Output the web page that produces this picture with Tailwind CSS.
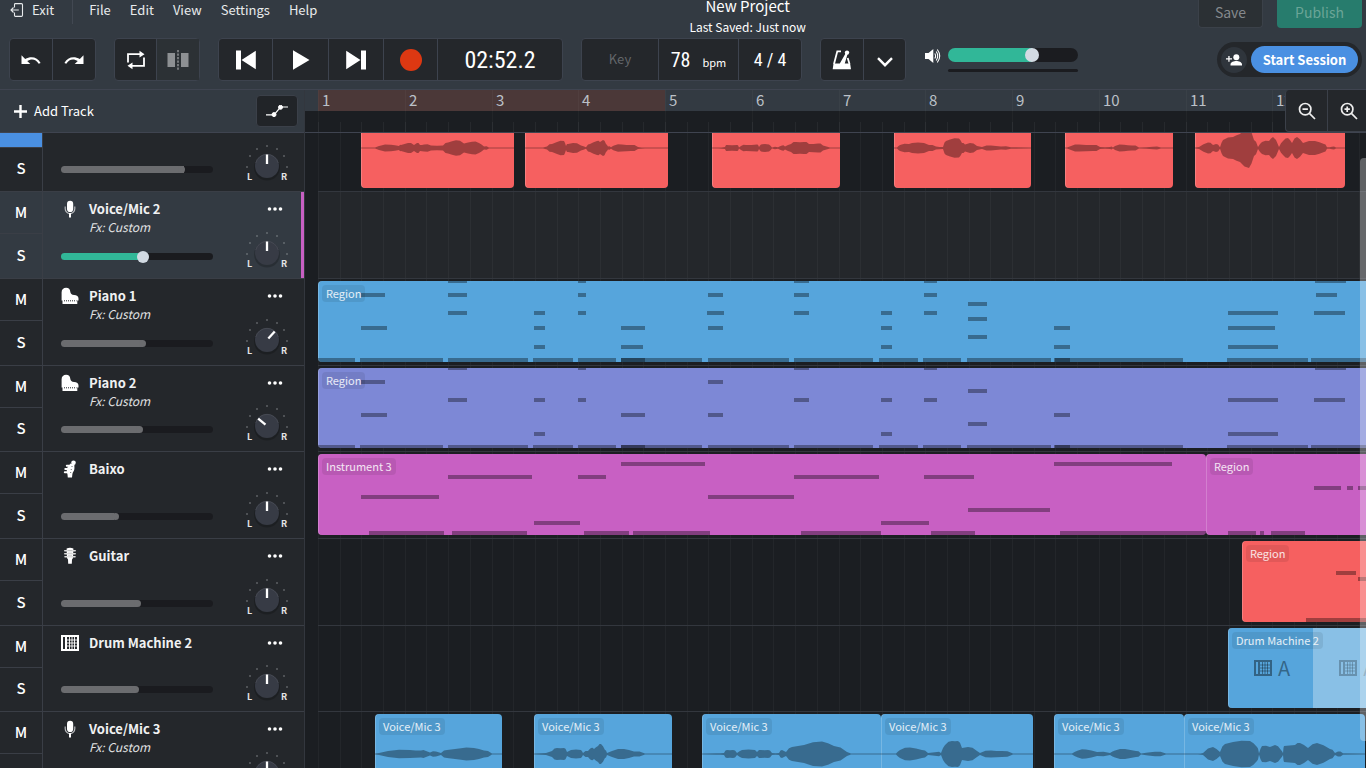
<!DOCTYPE html>
<html lang="en">
<head>
    <meta charset="UTF-8">
    <meta name="viewport" content="width=device-width, initial-scale=1.0">
    <title>New Project</title>
    <script src="https://cdn.jsdelivr.net/npm/@tailwindcss/browser@4"></script>
</head>
<body class="h-screen overflow-hidden flex flex-col bg-[#1b1e22] text-white font-['Noto_Sans_CJK_SC','Noto_Sans',sans-serif]">

    <!-- icons used more than once -->
    <svg class="hidden">
        <symbol id="icon-mic" viewBox="0 0 18 18">
            <rect x="6" y=".8" width="6.200" height="11.200" rx="3.100" fill="#fff"/>
            <path d="M4.200 6.500v2.300a4.800 4.800 0 0 0 9.600 0V6.500" fill="none" stroke="#b8babd" stroke-width="1.200"/>
            <path d="M9 13v4.500" stroke="#fff" stroke-width="2"/>
        </symbol>
        <symbol id="icon-piano" viewBox="0 0 18 18">
            <path d="M.6 13.500V5.200C.6 2.500 2.600.8 5.100.8c2.600 0 4 1.500 4.200 4 .2 2 1.400 3 3.800 3.200 2.700.2 4.400 1.300 4.400 3.400v2.100z" fill="#fff"/>
            <path d="M1.500 13h14.800v4H1.500z" fill="#fff"/>
            <path d="M3 13.800h12.500" stroke="#24272b" stroke-width="1" stroke-dasharray="1 1"/>
        </symbol>
        <symbol id="icon-bass" viewBox="0 0 18 18">
            <circle cx="12.500" cy="2.800" r="2.300" fill="#fff"/>
            <path d="M9.500 3.500 13.600 4.500C13 6 13.800 7.500 13.300 9.500c-.4 1.700-1.600 2.700-1.900 4.500l-.4 3.500H6.800l-.3-3C5.800 12 5.500 10.500 6 8.500c.4-2 2.500-3 3.500-5z" fill="#fff"/>
            <path d="M5.800 5.800h3M4.300 9h3M3.800 12.300h3" stroke="#fff" stroke-width="2" stroke-linecap="round"/>
            <path d="M11 6v1M10.300 9v1M9.600 12v1" stroke="#888" stroke-width="1.200"/>
        </symbol>
        <symbol id="icon-guitar" viewBox="0 0 18 18">
            <path d="M5.600 1.500Q9 .2 12.400 1.500L12 11l-1 1.500-.2 4.200H7.200L7 12.500 6 11z" fill="#fff"/>
            <path d="M3.800 3.800h10.400M3.800 6.800h10.400M4 9.800h10" stroke="#ddd" stroke-width="1.600" stroke-linecap="round"/>
            <path d="M8 3v7M10 3v7" stroke="#999" stroke-width=".7" stroke-dasharray="1 1.500"/>
        </symbol>
        <symbol id="icon-drum" viewBox="0 0 18 18">
            <path d="M0 1h18v16H0zM2 3v12h2V3zM6 3v12h10V3z" fill="currentColor" fill-rule="evenodd"/>
            <path d="M8.500 3v12M11 3v12M13.500 3v12M6 6h10M6 9h10M6 12h10" stroke="currentColor" stroke-width=".9"/>
        </symbol>
        <symbol id="icon-undo" viewBox="0 0 20 12">
            <path d="M.5 1.200v8.800h8.800L6.200 7C10.500 4.200 15 5 17.700 9.800l1.900-.7C16.600 3 10 1.600 4.200 5z" fill="#fff"/>
        </symbol>
    </svg>

    <header class="shrink-0 bg-[#333a42] border-b border-[#3f4450]">
        <div class="flex items-start h-[38px] pr-1">
            <nav class="flex items-start text-[13px] leading-5 text-[#e8eaec]">
                <a href="#" class="flex items-center pl-[10px]">
                    <svg class="w-3.5 h-3.5 mr-2" viewBox="0 0 14 14" fill="none" stroke="#e8eaec" stroke-width="1.1">
                        <path d="M4.500 4.500V1.500q0-.9.900-.9h6q1.100 0 1.100 1.100v10.600q0 1.100-1.100 1.100h-6q-.9 0-.9-.9V9.500M8.800 7H1M3.500 4.500 1 7l2.500 2.500"/>
                    </svg>
                    Exit
                </a>
                <span class="w-px h-6 ml-[18px] mr-4 bg-[#424852]"></span>
                <a href="#" class="mr-[19px]">File</a>
                <a href="#" class="mr-[19px]">Edit</a>
                <a href="#" class="mr-[19px]">View</a>
                <a href="#" class="mr-[19px]">Settings</a>
                <a href="#">Help</a>
            </nav>
            <div class="flex-1 pr-5 text-center">
                <h1 class="text-[15px] leading-3">New Project</h1>
                <p class="mt-1 text-[12px] leading-[21px]">Last Saved: Just now</p>
            </div>
            <button class="w-[65px] h-7 pb-1 mr-3.5 rounded-b border border-t-0 border-[#3b4149] bg-[#2b3034] text-[14px] leading-5 text-[#85898d]">Save</button>
            <button class="w-[85px] h-7 pb-1 rounded-b bg-[#277c6d] text-[14px] leading-5 text-[#6ba597]">Publish</button>
        </div>

        <div class="flex items-start gap-[18px] pl-[9px] pr-1 pb-2">
            <div class="flex h-[43px] rounded border border-[#3d434e] bg-[#24272b] divide-x divide-[#3d434e]">
                <button aria-label="Undo" class="w-[43px] flex items-center justify-center"><svg class="w-5 h-3"><use href="#icon-undo"/></svg></button>
                <button aria-label="Redo" class="w-[42px] flex items-center justify-center"><svg class="w-5 h-3 -scale-x-100"><use href="#icon-undo"/></svg></button>
            </div>

            <div class="flex h-[43px] rounded border border-[#3d434e] bg-[#24272b] divide-x divide-[#3d434e]">
                <button aria-label="Loop" class="w-[42px] flex items-center justify-center">
                    <svg class="w-5 h-5" viewBox="0 0 20 20">
                        <path d="M2 12.500V4.200h13M18 7.500v8.300H5" fill="none" stroke="#fff" stroke-width="1.800"/>
                        <path d="M13.500.8 18.500 4.200 13.500 7.600zM6.500 12.400 1.500 15.800 6.500 19.200z" fill="#fff"/>
                    </svg>
                </button>
                <button aria-label="Split" class="w-[42px] flex items-center justify-center bg-[#2c3135]">
                    <svg class="w-[22px] h-5" viewBox="0 0 22 20">
                        <path d="M.5 3H8v14H.5zM14 3h7.500v14H14z" fill="#8d9093"/>
                        <path d="M11 0v20" stroke="#8d9093" stroke-width="1.500" stroke-dasharray="2.200 1.300"/>
                    </svg>
                </button>
            </div>

            <div class="flex h-[43px] rounded border border-[#3d434e] bg-[#24272b] divide-x divide-[#3d434e]">
                <button aria-label="Go to start" class="w-[54px] flex items-center justify-center">
                    <svg class="w-5 h-5" viewBox="0 0 20 20" fill="#fff"><path d="M0 .5h5v19H0zM19.800.8v18.400L5.500 10z"/></svg>
                </button>
                <button aria-label="Play" class="w-[56px] flex items-center justify-center">
                    <svg class="w-5 h-5" viewBox="0 0 20 20" fill="#fff"><path d="M2 .3 18.500 10 2 19.700z"/></svg>
                </button>
                <button aria-label="Go to end" class="w-[55px] flex items-center justify-center">
                    <svg class="w-5 h-5" viewBox="0 0 20 20" fill="#fff"><path d="M15 .5h5v19h-5zM.2.8v18.400L14.500 10z"/></svg>
                </button>
                <button aria-label="Record" class="w-[54px] flex items-center justify-center">
                    <span class="size-[22px] rounded-full bg-[#dd3812]"></span>
                </button>
                <div class="w-[124px] flex items-center justify-center text-[24px] font-['Liberation_Sans_Narrow','Roboto_Condensed',sans-serif]">02:52.2</div>
            </div>

            <div class="flex h-[43px] rounded border border-[#3d434e] bg-[#24272b] divide-x divide-[#3d434e]">
                <button class="w-[77px] pb-0.5 text-[13px] text-[#63666a]">Key</button>
                <button class="w-[80px] flex items-baseline justify-center gap-3 pt-1.5 text-[20px] font-['Liberation_Sans_Narrow','Roboto_Condensed',sans-serif]">78 <span class="text-[11px] font-['Noto_Sans_CJK_SC',sans-serif]">bpm</span></button>
                <button class="w-[62px] text-[18px] font-['Liberation_Sans_Narrow','Roboto_Condensed',sans-serif]">4 / 4</button>
            </div>

            <div class="flex h-[43px] rounded border border-[#3d434e] bg-[#24272b] divide-x divide-[#3d434e]">
                <button aria-label="Metronome" class="w-[43px] flex items-center justify-center">
                    <svg class="w-5 h-5" viewBox="0 0 20 20">
                        <path d="M9 1.300H5.300L2 14M15.700 8 17.500 14" fill="none" stroke="#fff" stroke-width="1.800"/>
                        <path d="M1.500 13.500h16.600l.9 5.700H.7zM7.500 14l6.300-11 1.800 1-3 10z" fill="#fff"/>
                        <circle cx="15" cy="2.600" r="2.200" fill="#fff"/>
                    </svg>
                </button>
                <button aria-label="Metronome options" class="w-[41px] flex items-center justify-center">
                    <svg class="w-4 h-2.5 mt-1" viewBox="0 0 16 10" fill="none" stroke="#fff" stroke-width="2.400"><path d="M1 1.200 8 8.200 15 1.200"/></svg>
                </button>
            </div>

            <div class="flex items-start gap-1.5 mt-2.5">
                <svg class="w-[18px] h-4" viewBox="0 0 18 16">
                    <path d="M1 5h3.500l4.800-4v14l-4.800-4H1z" fill="#fff"/>
                    <path d="M10.800 5.500q1.600 2.500 0 5M12.200 3.500q3 4.500 0 9M13.300 1.500q4.800 6.500 0 13" fill="none" stroke="#fff" stroke-width="1.100"/>
                </svg>
                <div class="w-[130px]">
                    <input type="range" aria-label="Master volume" min="0" max="100" value="66" style="background:linear-gradient(to right,#31b798 65%,#1b1c20 65%)"
                        class="block w-full h-[14px] appearance-none rounded-full [&::-webkit-slider-thumb]:appearance-none [&::-webkit-slider-thumb]:size-[14px] [&::-webkit-slider-thumb]:rounded-full [&::-webkit-slider-thumb]:bg-[#d2dae3]">
                    <div class="h-[3px] mt-[7px] rounded-full bg-[#1b1c20]"></div>
                </div>
            </div>

            <div class="ml-auto mt-1 flex items-center gap-1 h-[35px] px-1 rounded-full bg-[#24272b]">
                <button aria-label="Invite" class="size-[26px] rounded-full bg-[#2f353c] flex items-center justify-center">
                    <svg class="w-4 h-4" viewBox="0 0 16 16" fill="#fff">
                        <circle cx="10.300" cy="5.300" r="3"/>
                        <path d="M4.500 13.500v-1.200C4.500 10.200 8 9 10.300 9S16 10.200 16 12.300v1.200zM2.300 4h1.300v2.200H6v1.300H3.600v2.200H2.300V7.500H0V6.200h2.300z"/>
                    </svg>
                </button>
                <button class="w-[107px] h-[27px] rounded-full bg-[#4a90e2] text-[13px] leading-5 font-bold">Start Session</button>
            </div>
        </div>
    </header>

    <main class="flex flex-1 min-h-0">
        <aside class="w-[305px] shrink-0 flex flex-col border-r border-[#33373e] bg-[#24272b]">
            <div class="shrink-0 h-[43px] flex items-center justify-between pl-3.5 pr-1.5 bg-[#333a42] border-b border-[#3f4450]">
                <button class="flex items-center gap-[7px] text-[13px]">
                    <svg class="w-[13px] h-[13px]" viewBox="0 0 13 13" stroke="#fff" stroke-width="2.400"><path d="M6.500 0v13M0 6.500h13"/></svg>
                    Add Track
                </button>
                <button aria-label="Automation" class="w-[42px] h-8 rounded border border-[#3b4049] bg-[#212428] flex items-center justify-center">
                    <svg class="w-[22px] h-3" viewBox="0 0 22 12" stroke="#fff" fill="#fff">
                        <path d="M0 9.800h8L14.500 2H22" fill="none" stroke-width="1.200"/>
                        <circle cx="8" cy="9.600" r="2"/><circle cx="14.500" cy="2.300" r="2"/>
                    </svg>
                </button>
            </div>
            <div class="flex-1 min-h-0 overflow-hidden">
                <div id="tracks" class="-mt-7"></div>
            </div>
        </aside>

        <section class="relative flex-1 min-w-0 flex flex-col overflow-hidden">
            <svg id="ruler" class="shrink-0 w-full h-[43px]"></svg>
            <div class="relative flex-1 min-h-0 overflow-hidden pl-[13px]">
                <div id="lanes" class="-mt-7"></div>
            </div>
            <div class="absolute top-0 -right-1 flex h-[42px] rounded-l border border-t-0 border-[#3b4049] bg-[#24272b] divide-x divide-[#3b4049]">
                <button aria-label="Zoom out" class="w-[42px] flex items-center justify-center">
                    <svg class="w-[18px] h-[18px]" viewBox="0 0 18 18" fill="none" stroke="#eee" stroke-width="1.700"><circle cx="7.200" cy="7.200" r="5.700"/><path d="M11.400 11.400 17 17M4.500 7.200h5.400"/></svg>
                </button>
                <button aria-label="Zoom in" class="w-[41px] flex items-center justify-center">
                    <svg class="w-[18px] h-[18px]" viewBox="0 0 18 18" fill="none" stroke="#eee" stroke-width="1.700"><circle cx="7.200" cy="7.200" r="5.700"/><path d="M11.400 11.400 17 17M4.500 7.200h5.400M7.200 4.500v5.400"/></svg>
                </button>
            </div>
            <div class="absolute right-0 top-[68px] bottom-[27px] w-1.5 rounded-l bg-white/30"></div>
        </section>
    </main>

    <script>
        const BAR = 86.75;
        const BARS = 24;

        // Note rows are [y, start, end, start, end, ...], x counted from the start of the song
        const pianoBottom = [79, 0, 37, 42, 125, 130, 210, 215, 255, 260, 298, 303, 384, 303, 327, 390, 471, 476, 555, 561, 600, 605, 643, 649, 733, 736, 865, 737, 752, 909, 990, 993, 1080];
        const piano1 = [
            [0, 130, 149, 260, 268, 476, 491, 606, 619, 997, 1028],
            [14, 43, 67, 130, 149, 260, 268, 390, 405, 476, 491, 606, 619, 998, 1019],
            [23, 650, 669],
            [32, 130, 149, 216, 227, 260, 268, 389, 406, 476, 491, 563, 574, 606, 619, 910, 960, 996, 1027],
            [38, 650, 669],
            [47, 43, 69, 216, 227, 303, 327, 390, 405, 563, 574, 736, 752, 910, 957],
            [56, 650, 669],
            [66, 216, 227, 303, 325, 563, 574, 736, 752, 910, 960],
            pianoBottom
        ];
        const piano2 = [
            [0, 130, 149, 260, 268, 476, 491, 606, 619, 997, 1028],
            [14, 43, 67, 390, 405],
            [23, 650, 669],
            [32, 130, 149, 216, 227, 260, 268, 476, 491, 563, 574, 606, 619, 910, 960, 996, 1027],
            [47, 43, 69, 303, 327, 390, 405, 736, 752],
            [56, 650, 669],
            [66, 216, 227, 563, 574, 910, 960],
            pianoBottom
        ];
        const bass1 = [
            [10, 303, 387, 736, 854],
            [23, 130, 214, 260, 288, 476, 561, 606, 656],
            [43, 43, 121, 390, 476],
            [56, 650, 732],
            [69, 216, 262, 563, 611],
            [79, 51, 126, 134, 209, 266, 311, 315, 392, 483, 563, 613, 657, 742, 888]
        ];

        // Waveforms are [x, amplitude, x, amplitude, ...]
        const tracks = [
            { name: 'Voice/Mic 1', icon: 'mic', volume: 81, pan: 0, muted: true, color: '#f66060', regions: [
                { x: 43, w: 153, wave: [14, .5, 18, 2, 30, 3.3, 38, 2, 40, 3, 47, 5, 53, 3, 56, 5, 59, 3, 63, 3.5, 70, 2.5, 82, 2.5, 87, 5.5, 95, 7.7, 103, 4.5, 111, 6.3, 118, 5, 123, 1.5, 128, .5] },
                { x: 207, w: 143, wave: [18, .5, 22, 1.5, 27, 4, 32, 6, 39, 7, 41, 2, 43, 4, 48, 5, 56, 2.5, 61, .7, 65, 4, 72, 7, 75, 6, 78, 8, 81, 4, 83, 1.5, 86, .7, 89, 2.5, 97, 3.5, 106, 3, 113, 1, 120, .5] },
                { x: 394, w: 128, wave: [6, .5, 13, 1, 15, 3, 25, 3, 27, .5, 29, 2, 34, 3, 45, 3.5, 47, 1, 49, 3.5, 57, 3.5, 60, .5, 66, .7, 70, 2.5, 73, 1.5, 79, 4, 84, 6, 92, 6, 97, 4, 106, 4.5, 111, 2.5, 118, .5] },
                { x: 576, w: 137, wave: [3, .5, 6, 3, 15, 4, 18, 5, 30, 5, 35, 3, 42, 1.5, 49, 1, 52, 7, 56, 8.5, 65, 9.5, 68, 5, 71, 3.5, 76, 5, 83, 2, 88, 1, 97, 2.5, 107, 1.5, 117, .7] },
                { x: 747, w: 108, wave: [2, .5, 6, 2, 14, 3.5, 28, 3, 35, 1, 45, 1, 48, .5, 50, 2, 59, 3.3, 67, 2.5, 74, .5, 88, 1.3, 96, .5] },
                { x: 877, w: 150, wave: [4, 1, 13, 5.5, 18, 3, 21, 4, 25, .7, 28, 8, 38, 11, 45, 14, 54, 20, 59, 8, 63, 1, 67, 6, 74, 7, 78, 11, 84, 1, 88, 7, 93, 10, 97, 5, 102, 11, 108, 5, 120, 7, 129, 4, 132, .7, 137, 1.2, 141, .5] }
            ] },
            { name: 'Voice/Mic 2', fx: true, icon: 'mic', volume: 54, pan: 0, selected: true, color: '#c860c3', regions: [] },
            { name: 'Piano 1', fx: true, icon: 'piano', volume: 54, pan: 42, color: '#56a5dc', regions: [{ name: 'Region', x: 0, w: 1400, notes: piano1 }] },
            { name: 'Piano 2', fx: true, icon: 'piano', volume: 52, pan: -50, color: '#7d88d6', regions: [{ name: 'Region', x: 0, w: 1400, notes: piano2 }] },
            { name: 'Baixo', icon: 'bass', volume: 35, pan: 0, color: '#c860c3', regions: [
                { name: 'Instrument 3', x: 0, w: 888, notes: bass1 },
                { name: 'Region', x: 888, w: 500, notes: [[34, 108, 135, 141, 147, 152, 175], [79, 22, 50, 54, 58, 65, 99]] }
            ] },
            { name: 'Guitar', icon: 'guitar', volume: 50, pan: 0, color: '#f66060', regions: [
                { name: 'Region', x: 924, w: 500, notes: [[32, 94, 114], [38, 116, 136], [79, 64, 300]] }
            ] },
            { name: 'Drum Machine 2', icon: 'drum', volume: 49, pan: 0, color: '#56a5dc', regions: [
                { name: 'Drum Machine 2', x: 910, w: 500, pattern: 'A' }
            ] },
            { name: 'Voice/Mic 3', fx: true, icon: 'mic', volume: 50, pan: 0, color: '#56a5dc', regions: [
                { x: 57, w: 127, wave: [4, 1, 13, 3, 35, 4, 46, 3.5, 51, 3, 55, 1.5, 61, 2.5, 66, 1, 72, 4, 84, 5.5, 99, 6, 109, 3.5, 117, .5] },
                { x: 216, w: 138, wave: [12, 1, 18, 3, 23, 6, 30, 6, 33, 2, 37, 4, 47, 4, 49, 1, 54, 3, 57, 6, 60, 5, 64, 8, 67, 10, 71, 4, 73, 1, 78, 3, 90, 5, 100, 2.5, 111, .5] },
                { x: 384, w: 179, wave: [14, .7, 22, 1, 25, 4, 31, 4, 35, 1, 40, 4, 53, 4, 55, 2, 59, 4, 66, 4, 70, 1, 77, 1, 80, 4, 84, 2, 90, 7, 102, 9, 120, 12.5, 132, 8, 145, 2, 149, .5] },
                { x: 563, w: 152, wave: [15, .5, 19, 4, 29, 6.5, 41, 4, 47, 1, 56, 2, 60, 1, 64, 9, 71, 13, 77, 13, 81, 6, 87, 7, 96, 3, 99, 1, 110, 3.5, 121, 3, 132, .5] },
                { x: 736, w: 130, wave: [18, .5, 24, 3.5, 32, 4.5, 43, 2, 56, 1, 61, 3.5, 71, 5, 82, 3, 87, .5, 101, 2.3, 112, .5] },
                { x: 866, w: 181, wave: [14, .5, 19, 1, 29, 7, 36, 2, 41, 10, 49, 12, 66, 13, 73, 7, 75, .7, 78, 8, 86, 7, 91, 9, 97, 4, 99, 1, 100, 8, 111, 9, 116, 11, 124, 6, 133, 11, 146, 5, 151, 1, 154, 2.5, 159, .7] }
            ] }
        ];

        function knob(track) {
            const dots = [[-20, 1], [-17, -10], [-10, -17], [0, -20], [10, -17], [17, -10], [20, 1]];
            return `
                <label class="block">
                    <input type="range" class="sr-only" aria-label="${track.name} pan" min="-90" max="90" value="${track.pan}">
                    <svg class="w-11 h-11" viewBox="-22 -22 44 44">
                        ${dots.map(([x, y]) => `<circle cx="${x}" cy="${y}" r=".7" fill="#9a9da1"/>`).join('')}
                        <circle cy="1.5" r="13" fill="#000" fill-opacity=".2"/>
                        <circle r="12" fill="#373b45"/>
                        <path d="M-11.300 -3A11.700 11.700 0 0 1 11.300 -3" fill="none" stroke="#4a4e57" stroke-width=".8"/>
                        <path d="M0 -11.500V-2" stroke="#fff" stroke-width="2.300" transform="rotate(${track.pan})"/>
                        <text x="-20" y="14" font-size="9" class="fill-[#e4e5e6] font-bold">L</text>
                        <text x="14" y="14" font-size="9" class="fill-[#e4e5e6] font-bold">R</text>
                    </svg>
                </label>`;
        }

        function slider(track) {
            const fill = track.selected ? '#31b798' : '#6b6c6f';
            const thumb = track.selected
                ? '[&::-webkit-slider-thumb]:size-3 [&::-webkit-slider-thumb]:bg-[#d2dae3]'
                : '[&::-webkit-slider-thumb]:size-[7px] [&::-webkit-slider-thumb]:bg-[#6b6c6f]';
            return `<input type="range" aria-label="${track.name} volume" min="0" max="100" value="${track.volume}"
                style="background:linear-gradient(to right,${fill} ${track.volume}%,#1a1b1f ${track.volume}%)"
                class="block w-[152px] h-[7px] mb-[18px] appearance-none rounded-full [&::-webkit-slider-thumb]:appearance-none [&::-webkit-slider-thumb]:rounded-full ${thumb}">`;
        }

        function trackRow(track) {
            return `
                <div class="flex h-[87px] nth-[3n+1]:h-[86px] border-t border-[#3a3e46] ${track.selected ? 'bg-[#333a42]' : ''}">
                    <div class="w-[43px] shrink-0 flex flex-col border-r border-[#3a3e46] divide-y divide-[#3a3e46] text-[15px] font-medium">
                        <button class="h-[42px] ${track.muted ? 'bg-[#4a90e2]' : ''}">M</button>
                        <button class="flex-1 pb-0.5">S</button>
                    </div>
                    <div class="flex-1 flex justify-between pl-[18px] ${track.selected ? 'pr-3 border-r-3 border-[#c860c3]' : 'pr-[15px]'}">
                        <div class="flex flex-col justify-between">
                            <div class="flex items-start gap-2.5 pt-2">
                                <svg class="w-[18px] h-[18px]"><use href="#icon-${track.icon}"/></svg>
                                <div>
                                    <h2 class="text-[13px] leading-[18px] font-bold text-[#f0f1f2]">${track.name}</h2>
                                    ${track.fx ? '<p class="text-[12px] leading-[18px] italic text-[#e0e1e2]">Fx: Custom</p>' : ''}
                                </div>
                            </div>
                            ${slider(track)}
                        </div>
                        <div class="flex flex-col items-end justify-between pb-[3px]">
                            <button aria-label="${track.name} options" class="pt-[15px] pr-1.5">
                                <svg class="w-4 h-1" viewBox="0 0 16 4" fill="#fff"><circle cx="2.500" cy="2" r="1.800"/><circle cx="8" cy="2" r="1.800"/><circle cx="13.500" cy="2" r="1.800"/></svg>
                            </button>
                            ${knob(track)}
                        </div>
                    </div>
                </div>`;
        }

        function wavePath(w, wave) {
            let top = 'M0 39.5';
            let bottom = '';
            for (let i = 0; i < wave.length; i += 2) {
                top += `L${wave[i]} ${40 - wave[i + 1]}`;
                bottom = `L${wave[i]} ${40 + wave[i + 1]}` + bottom;
                // ripple between two points so the edge is not flat
                if (i + 2 < wave.length) {
                    const mid = (wave[i] + wave[i + 2]) / 2;
                    const amp = (wave[i + 1] + wave[i + 3]) * .35 + Math.max(wave[i + 1], wave[i + 3]) * .3 + (i % 4 ? .6 : -.2);
                    top += `L${mid} ${40 - amp}`;
                    bottom = `L${mid} ${40 + amp}` + bottom;
                }
            }
            return `<path d="${top}L${w} 39.5V40.5${bottom}L0 40.5Z"/>`;
        }

        function noteRects(rows) {
            let out = '';
            rows.forEach(([y, ...xs]) => {
                for (let i = 0; i < xs.length; i += 2) {
                    out += `<rect x="${xs[i]}" y="${y - 2}" width="${xs[i + 1] - xs[i]}" height="4"/>`;
                }
            });
            return out;
        }

        function region(track, r) {
            return `
                <div class="absolute top-0.5 bottom-[3px] rounded overflow-hidden inset-shadow-[1px_0_0_rgba(255,255,255,0.2)]" style="left:${r.x}px;width:${r.w}px;background:${track.color}">
                    ${r.pattern ? `
                    <div class="absolute inset-y-0 left-[85px] right-0 bg-white/30"></div>
                    <div class="flex h-full items-center pl-[26px] gap-[49px] text-[20px] text-black/40">
                        <span class="flex items-center gap-1.5"><svg class="size-[18px]"><use href="#icon-drum"/></svg>${r.pattern}</span>
                        <span class="flex items-center gap-1.5 opacity-60"><svg class="size-[18px]"><use href="#icon-drum"/></svg>${r.pattern}</span>
                    </div>` : `
                    <svg class="block w-full h-full fill-black/35">${r.wave ? wavePath(r.w, r.wave) : noteRects(r.notes)}</svg>`}
                    <span class="absolute left-1 top-1 px-1 rounded bg-black/8 text-[11px] leading-[17px] whitespace-nowrap text-white/85">${r.name || track.name}</span>
                </div>`;
        }

        function beatLines(y1, y2, offset) {
            let out = '';
            for (let i = 0; i < BARS * 4; i++) {
                const x = Math.round(offset + i * BAR / 4) + .5;
                out += `<path d="M${x} ${y1}V${y2}"/>`;
            }
            return out;
        }

        function lane(track) {
            return `
                <div class="relative h-[87px] nth-[3n+1]:h-[86px] border-t border-[#33373e] ${track.selected ? 'bg-[#24272b]' : ''}">
                    <svg class="absolute inset-0 w-full h-full stroke-white/4">${beatLines(0, 87, 0)}</svg>
                    ${track.regions.map(r => region(track, r)).join('')}
                </div>`;
        }

        function renderRuler() {
            let out = `
                <rect width="100%" height="21" fill="#333a42"/>
                <rect x="13" width="${BAR * 4}" height="21" fill="#4b3838"/>
                <rect y="42" width="100%" height="1" fill="#3f4450"/>
                <g class="stroke-white/5">${beatLines(32, 42, 13)}</g>`;
            for (let i = 0; i < BARS; i++) {
                const x = Math.round(13 + i * BAR);
                out += `<rect x="${x}" width="1" height="42" fill="#fff" fill-opacity=".03"/>
                    <text x="${x + 4}" y="16" font-size="15" fill="#bcc1c8">${i + 1}</text>`;
            }
            document.getElementById('ruler').innerHTML = out;
        }

        document.getElementById('tracks').innerHTML = tracks.map(trackRow).join('');
        document.getElementById('lanes').innerHTML = tracks.map(lane).join('');
        renderRuler();
    </script>
</body>
</html>
